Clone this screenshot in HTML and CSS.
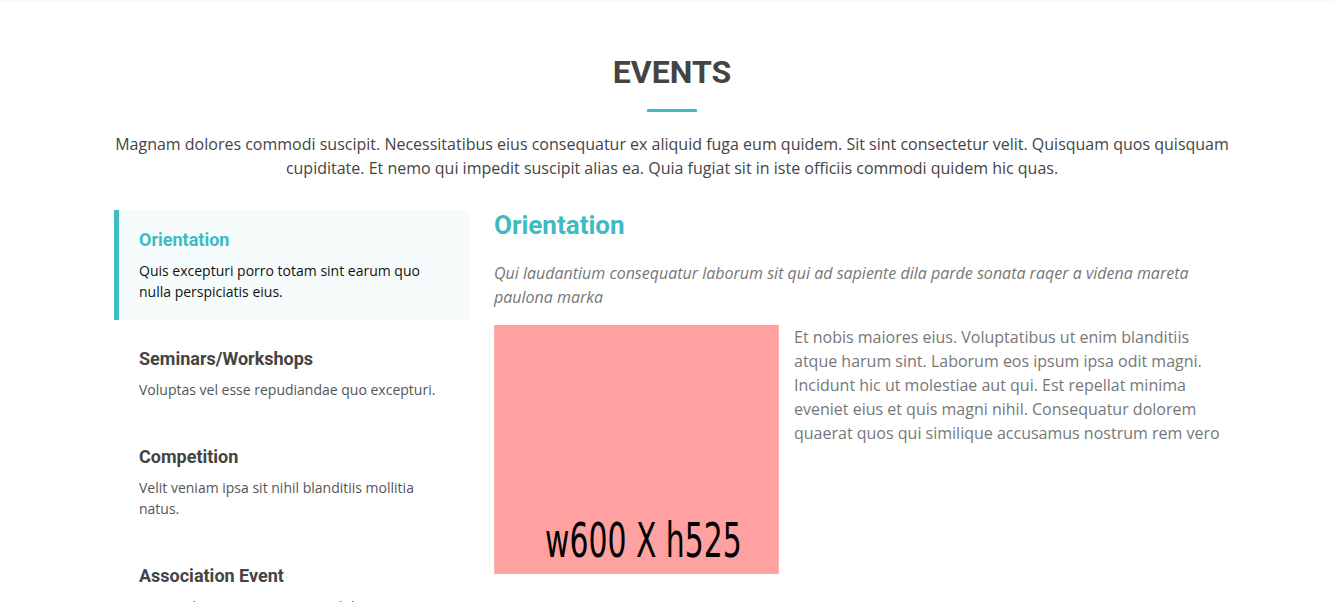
FILE: index.html
```html
<!DOCTYPE html>
<html lang="en">
<head>
  <meta charset="UTF-8" />
  <meta name="viewport" content="width=device-width, initial-scale=1.0"/>
  <title>Events</title>
  <link rel="stylesheet" href="styles.css">
</head>
<body>
  <section class="events">
    <div class="section-title">
      <h2>EVENTS</h2>
      <p>Magnam dolores commodi suscipit. Necessitatibus eius consequatur ex aliquid fuga eum quidem. Sit sint consectetur velit. Quisquam quos quisquam cupiditate. Et nemo qui impedit suscipit alias ea. Quia fugiat sit in iste officiis commodi quidem hic quas.</p>
    </div>

    <div class="row">
      <ul class="tabs">
        <li class="tab active">
          <h4>Orientation</h4>
          <p>Quis excepturi porro totam sint earum quo nulla perspiciatis eius.</p>
        </li>
        <li class="tab">
          <h4>Seminars/Workshops</h4>
          <p>Voluptas vel esse repudiandae quo excepturi.</p>
        </li>
        <li class="tab">
          <h4>Competition</h4>
          <p>Velit veniam ipsa sit nihil blanditiis mollitia natus.</p>
        </li>
        <li class="tab">
          <h4>Association Event</h4>
          <p>Ratione hic sapiente nostrum doloremque illum nulla praesentium id</p>
        </li>
      </ul>

      <div class="tab-content">
        <h3>Orientation</h3>
        <p class="lead">Qui laudantium consequatur laborum sit qui ad sapiente dila parde sonata raqer a videna mareta paulona marka</p>
        <div class="detail">
          <svg class="placeholder" viewBox="0 0 600 525" width="285" height="249">
            <rect width="600" height="525" fill="#ffa1a1"/>
            <text x="107" y="489" font-size="100" textLength="415" lengthAdjust="spacingAndGlyphs" font-family="DejaVu Sans, sans-serif" fill="#000">w600 X h525</text>
          </svg>
          <p>Et nobis maiores eius. Voluptatibus ut enim blanditiis atque harum sint. Laborum eos ipsum ipsa odit magni. Incidunt hic ut molestiae aut qui. Est repellat minima eveniet eius et quis magni nihil. Consequatur dolorem quaerat quos qui similique accusamus nostrum rem vero</p>
        </div>
      </div>
    </div>
  </section>
</body>
</html>
```

FILE: styles.css
```css
body { margin: 0; font-family: "Open Sans", sans-serif; color: #444; background: #fff; border-top: 2px solid #fafafa; }
h2, h3, h4 { font-family: Roboto, sans-serif; }

.events { width: 1110px; margin: 0 auto; padding-top: 51px; }

.section-title { text-align: center; padding: 0 0 30px 10px; }
.section-title h2 { position: relative; font-size: 32px; font-weight: 700; color: #444; margin: 0 0 20px; padding-bottom: 21px; line-height: 1.2; }
.section-title h2::after { content: ""; position: absolute; left: 50%; bottom: 0; width: 50px; height: 3px; margin-left: -25px; background: #3fbbc0; }
.section-title p { margin: 0 -11px; font-size: 16px; line-height: 24px; }

.row { display: flex; gap: 25px; padding-left: 2px; }

.tabs { list-style: none; margin: 0; padding: 0; width: 355px; flex-shrink: 0; display: flex; flex-direction: column; gap: 9px; }
.tab { border-left: 5px solid transparent; padding: 19px 20px 18px 20px; }
.tab h4 { margin: 0 0 9px; font-size: 18px; line-height: 22px; font-weight: 700; color: #444; }
.tab p { margin: 0; font-size: 14px; line-height: 21px; color: #555; }
.tab.active { background: #f6fcfc; border-left-color: #3fbbc0; }
.tab.active h4 { color: #3fbbc0; }
.tab.active p { color: #111; }

.tab-content { flex: 1; }
.tab-content h3 { margin: 0 0 20px; font-size: 26px; line-height: 31px; font-weight: 700; color: #3fbbc0; }
.tab-content .lead { margin: 0 0 16px; font-style: italic; color: #777; font-size: 16px; line-height: 24px; }

.detail { display: flex; gap: 15px; align-items: flex-start; }
.placeholder { display: block; flex-shrink: 0; }
.detail p { margin: 0; color: #777; font-size: 16px; line-height: 24px; }
```
